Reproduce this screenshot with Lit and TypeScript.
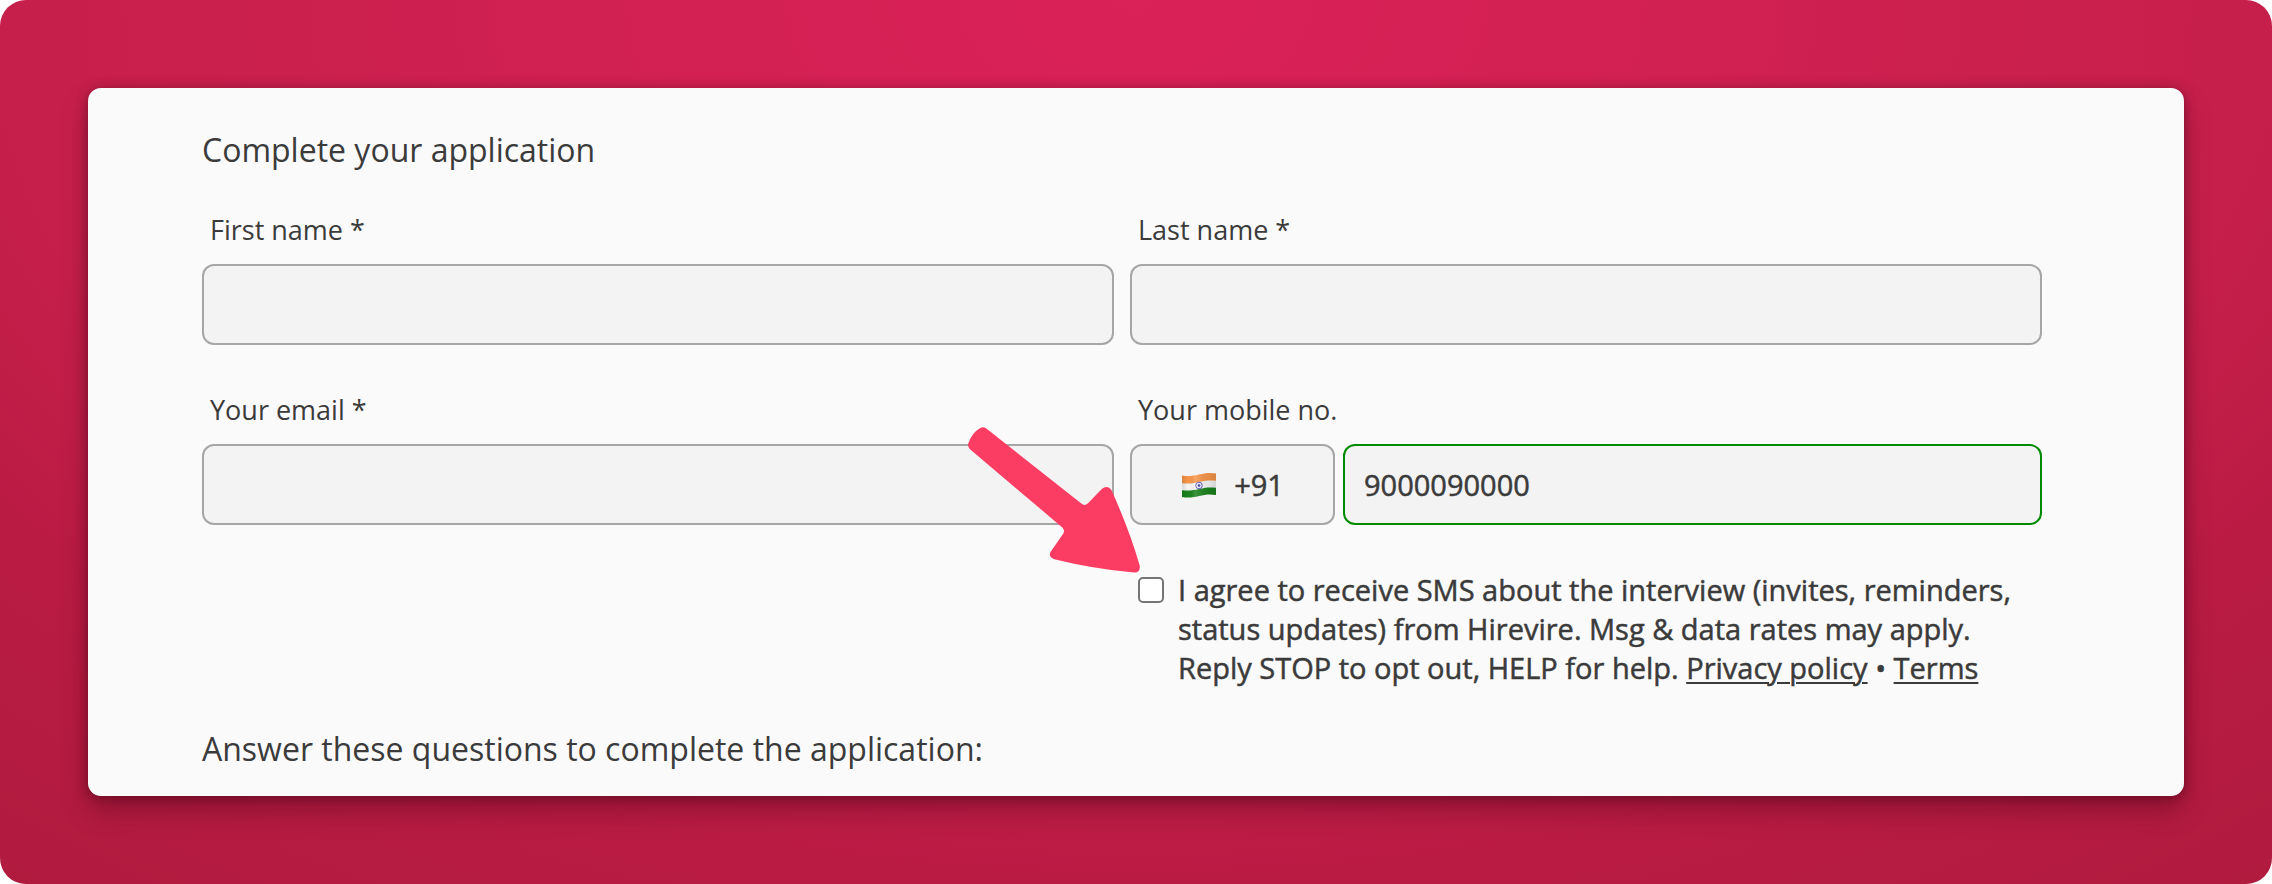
import { LitElement, html, css, svg } from "lit";
import { customElement, state } from "lit/decorators.js";

const flag = svg`
  <defs>
    <clipPath id="wave"><path d="M1 4.500C7 5.500 12 5 18 3.500C24 2 29 1.500 35 2.500V24C29 23 24 23.500 18 25C12 26.500 7 27 1 26Z"/></clipPath>
    <linearGradient id="sheen" x1="0" x2="1" y1="0" y2="0">
      <stop offset="0" stop-color="#000" stop-opacity=".14"/>
      <stop offset=".2" stop-color="#000" stop-opacity="0"/>
      <stop offset=".4" stop-color="#fff" stop-opacity=".14"/>
      <stop offset=".75" stop-color="#000" stop-opacity=".07"/>
      <stop offset="1" stop-color="#000" stop-opacity=".14"/>
    </linearGradient>
  </defs>
  <g clip-path="url(#wave)">
    <rect width="36" height="28" fill="#f6f6f6"/>
    <path d="M0 0H36V10C29 9 24 9.500 18 11C12 12.500 7 13 0 12Z" fill="#f8964a"/>
    <path d="M0 19C7 20 12 19.500 18 18C24 16.500 29 16 36 17V28H0Z" fill="#1b831d"/>
    <circle cx="18" cy="14.500" r="3.300" fill="#eef" stroke="#4a48b4" stroke-width=".9"/>
    <circle cx="18" cy="14.500" r="1.300" fill="#3a38a8"/>
    <rect width="36" height="28" fill="url(#sheen)"/>
  </g>`;

@customElement("app-root")
export class AppRoot extends LitElement {
  @state() private phone = "9000090000";

  static styles = css`
    :host {
      display: block;
      font-family: "Open Sans", "Noto Sans", sans-serif;
      color: #3b3b3b;
    }
    * {
      box-sizing: border-box;
    }
    .backdrop {
      padding: 88px;
      border-radius: 26px;
      background: radial-gradient(
        ellipse 80% 130% at 50% 0,
        #da2158 0%,
        #d32153 24%,
        #c61f4b 62%,
        #ba1b43 77%,
        #b01b3e 100%
      );
    }
    .card {
      padding: 40px 142px 25px 114px;
      border-radius: 13px;
      background: #fafafa;
      box-shadow: 0 16px 28px rgba(60, 0, 20, 0.3), 0 2px 12px rgba(60, 0, 20, 0.45);
    }
    .title {
      margin: 0;
      font-size: 32px;
      line-height: 44px;
      font-weight: 400;
    }
    .fields {
      display: grid;
      grid-template-columns: 1fr 1fr;
      gap: 45px 16px;
      margin: 38px 0 40px;
    }
    .field {
      display: flex;
      flex-direction: column;
      gap: 14px;
      min-width: 0;
    }
    .label {
      padding-left: 8px;
      font-size: 27px;
      line-height: 40px;
    }
    .box {
      width: 100%;
      height: 81px;
      border: 2px solid #a6a6a6;
      border-radius: 12px;
      background: #f3f3f3;
      padding: 0 19px;
      color: inherit;
      font: 400 29px "Open Sans", "Noto Sans", sans-serif;
      -webkit-text-stroke: 0.5px currentColor;
    }
    .valid {
      border-color: #008a00;
    }
    .phone {
      display: grid;
      grid-template-columns: 205px 1fr;
      gap: 8px;
    }
    .country {
      display: flex;
      align-items: center;
      justify-content: center;
      gap: 17px;
    }
    .flag {
      width: 36px;
      height: 28px;
    }
    .consent {
      position: relative;
      grid-column: 2;
      display: flex;
      align-items: flex-start;
      gap: 14px;
      padding-left: 8px;
      font-size: 29px;
      line-height: 39px;
      -webkit-text-stroke: 0.5px currentColor;
    }
    .tick {
      appearance: none;
      flex: none;
      width: 26px;
      height: 26px;
      margin: 7px 0 0;
      border: 2px solid #757575;
      border-radius: 5px;
      background: #fff;
    }
    .tick:checked {
      background: #3b3b3b;
    }
    .link {
      color: inherit;
      text-decoration-thickness: 2px;
      text-underline-offset: 3px;
    }
    .arrow {
      position: absolute;
      right: calc(100% - 10px);
      bottom: calc(100% - 3px);
      width: 172px;
      height: 146px;
      pointer-events: none;
      -webkit-text-stroke: 0;
    }
  `;

  private onPhone(e: Event) {
    this.phone = (e.target as HTMLInputElement).value;
  }

  render() {
    return html`
      <main class="backdrop">
        <form class="card">
          <h1 class="title">Complete your application</h1>
          <div class="fields">
            <div class="field">
              <label class="label" for="first">First name *</label>
              <input class="box" id="first" type="text" required />
            </div>
            <div class="field">
              <label class="label" for="last">Last name *</label>
              <input class="box" id="last" type="text" required />
            </div>
            <div class="field">
              <label class="label" for="email">Your email *</label>
              <input class="box" id="email" type="email" required />
            </div>
            <div class="field">
              <label class="label" for="mobile">Your mobile no.</label>
              <div class="phone">
                <button class="box country" type="button" aria-label="Country code, India +91">
                  <svg class="flag" viewBox="0 0 36 28" aria-hidden="true">${flag}</svg>
                  <span>+91</span>
                </button>
                <input class="box valid" id="mobile" type="tel" .value=${this.phone} @input=${this.onPhone} />
              </div>
            </div>
            <div class="consent">
              <input class="tick" id="sms" type="checkbox" />
              <label for="sms"
                >I agree to receive SMS about the interview (invites, reminders, status updates) from Hirevire. Msg &amp;
                data rates may apply. Reply STOP to opt out, HELP for help.
                <a class="link" href="#privacy">Privacy policy</a> • <a class="link" href="#terms">Terms</a></label
              >
              <svg class="arrow" viewBox="84 82 516 437" aria-hidden="true">
                <path
                  fill="#fc3d63"
                  d="M140 87L424 311Q434 320 444 310L486 267Q503 254 515 272Q570 395 599 497Q602 519 582 518Q460 507 343 478Q325 472 331 457L370 401Q375 391 367 383L90 148Q82 142 85 130Q96 99 122 84Q131 80 140 87Z"
                />
              </svg>
            </div>
          </div>
          <h2 class="title">Answer these questions to complete the application:</h2>
        </form>
      </main>
    `;
  }
}
